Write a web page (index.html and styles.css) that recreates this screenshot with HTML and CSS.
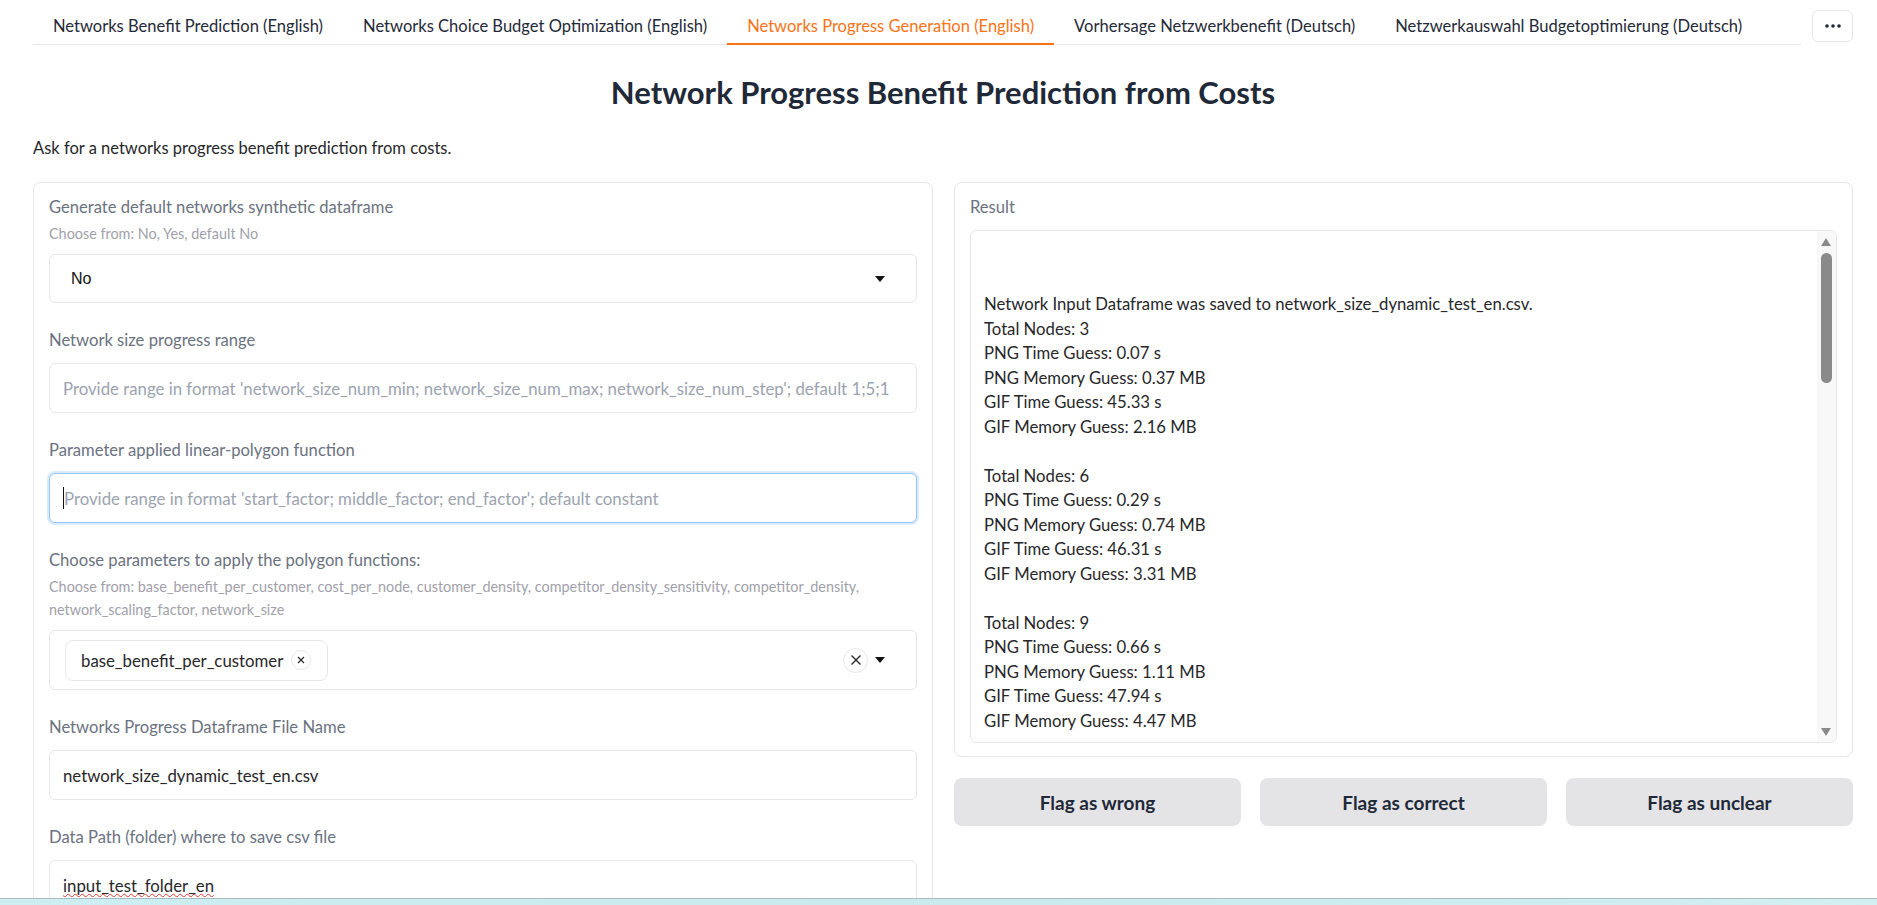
FILE: index.html
```html
<!DOCTYPE html>
<html lang="en">
<head>
<meta charset="utf-8">
<title>Network Progress Benefit Prediction from Costs</title>
<link rel="stylesheet" href="styles.css">
</head>
<body>
<div class="app">
  <div class="tabbar">
    <nav class="tabs">
      <button class="tab">Networks Benefit Prediction (English)</button>
      <button class="tab">Networks Choice Budget Optimization (English)</button>
      <button class="tab active">Networks Progress Generation (English)</button>
      <button class="tab">Vorhersage Netzwerkbenefit (Deutsch)</button>
      <button class="tab">Netzwerkauswahl Budgetoptimierung (Deutsch)</button>
    </nav>
    <button class="more" aria-label="More tabs">
      <svg width="16" height="4" viewBox="0 0 16 4"><circle cx="2" cy="2" r="1.8"/><circle cx="8" cy="2" r="1.8"/><circle cx="14" cy="2" r="1.8"/></svg>
    </button>
  </div>

  <h1 class="title">Network Progress Benefit Prediction from Costs</h1>
  <p class="desc">Ask for a networks progress benefit prediction from costs.</p>

  <div class="columns">
    <div class="panel form">
      <div class="field">
        <div class="label">Generate default networks synthetic dataframe</div>
        <div class="info">Choose from: No, Yes, default No</div>
        <div class="box select">
          <span class="select-val">No</span>
          <svg class="caret" width="10" height="6" viewBox="0 0 10 6"><path d="M0 0h10L5 6z"/></svg>
        </div>
      </div>

      <div class="field">
        <div class="label">Network size progress range</div>
        <div class="box input"><span class="placeholder">Provide range in format 'network_size_num_min; network_size_num_max; network_size_num_step'; default 1;5;1</span></div>
      </div>

      <div class="field">
        <div class="label">Parameter applied linear-polygon function</div>
        <div class="box input focused"><span class="cursor"></span><span class="placeholder">Provide range in format 'start_factor; middle_factor; end_factor'; default constant</span></div>
      </div>

      <div class="field">
        <div class="label">Choose parameters to apply the polygon functions:</div>
        <div class="info">Choose from: base_benefit_per_customer, cost_per_node, customer_density, competitor_density_sensitivity, competitor_density, network_scaling_factor, network_size</div>
        <div class="box multi">
          <span class="chip">base_benefit_per_customer<span class="chip-x">
            <svg width="8" height="8" viewBox="0 0 8 8"><path d="M1 1l6 6M7 1L1 7"/></svg></span></span>
          <span class="multi-tools">
            <span class="clear-x"><svg width="12" height="12" viewBox="0 0 12 12"><path d="M1.5 1.5l9 9M10.5 1.5l-9 9"/></svg></span>
            <svg class="caret" width="10" height="6" viewBox="0 0 10 6"><path d="M0 0h10L5 6z"/></svg>
          </span>
        </div>
      </div>

      <div class="field">
        <div class="label">Networks Progress Dataframe File Name</div>
        <div class="box input"><span class="value">network_size_dynamic_test_en.csv</span></div>
      </div>

      <div class="field">
        <div class="label">Data Path (folder) where to save csv file</div>
        <div class="box input"><span class="value spell">input_test_folder_en</span></div>
      </div>
    </div>

    <div class="right">
      <div class="panel result">
        <div class="label">Result</div>
        <div class="output">
          <div class="output-text">&nbsp;
&nbsp;
Network Input Dataframe was saved to network_size_dynamic_test_en.csv.
Total Nodes: 3
PNG Time Guess: 0.07 s
PNG Memory Guess: 0.37 MB
GIF Time Guess: 45.33 s
GIF Memory Guess: 2.16 MB
&nbsp;
Total Nodes: 6
PNG Time Guess: 0.29 s
PNG Memory Guess: 0.74 MB
GIF Time Guess: 46.31 s
GIF Memory Guess: 3.31 MB
&nbsp;
Total Nodes: 9
PNG Time Guess: 0.66 s
PNG Memory Guess: 1.11 MB
GIF Time Guess: 47.94 s
GIF Memory Guess: 4.47 MB</div>
          <div class="scrollbar">
            <svg class="sb-up" width="10" height="8" viewBox="0 0 10 8"><path d="M0 8L5 0l5 8z"/></svg>
            <div class="sb-thumb"></div>
            <svg class="sb-down" width="10" height="8" viewBox="0 0 10 8"><path d="M0 0h10L5 8z"/></svg>
          </div>
        </div>
      </div>
      <div class="flags">
        <button class="flag">Flag as wrong</button>
        <button class="flag">Flag as correct</button>
        <button class="flag">Flag as unclear</button>
      </div>
    </div>
  </div>
</div>
<div class="taskbar"></div>
</body>
</html>
```

FILE: styles.css
```css
* { box-sizing: border-box; }

html, body {
  margin: 0;
  padding: 0;
  background: #ffffff;
}

body {
  font-family: "Lato", "Noto Sans", sans-serif;
  font-size: 16.7px;
  color: #27272a;
  overflow: hidden;
  height: 905px;
}

.app {
  padding: 0 24px 0 33px;
}

/* ---------- tabs ---------- */
.tabbar {
  display: flex;
  align-items: flex-start;
}

.tabs {
  flex: 1;
  display: flex;
  height: 45px;
  padding-top: 8px;
  border-bottom: 1px solid #e5e7eb;
}

.tab {
  font: inherit;
  font-size: 16.55px;
  color: #1f2937;
  background: none;
  border: none;
  border-bottom: 2px solid transparent;
  padding: 0 20px;
  height: 37px;
  cursor: pointer;
  white-space: nowrap;
}

.tab.active {
  color: #f97316;
  border-bottom-color: #f97316;
}

.more {
  margin: 10px 0 0 11px;
  width: 41px;
  height: 32px;
  border: 1px solid #e5e7eb;
  border-radius: 6px;
  background: #fff;
  display: flex;
  align-items: center;
  justify-content: center;
  padding: 0;
}

.more svg { fill: #1f2937; }

/* ---------- header ---------- */
.title {
  margin: 27px 0 0;
  text-align: center;
  font-size: 31px;
  line-height: 40px;
  font-weight: 700;
  color: #1f2937;
}

.desc {
  margin: 24px 0 0;
  font-size: 16.5px;
  line-height: 24px;
  color: #27272a;
}

/* ---------- columns ---------- */
.columns {
  margin-top: 22px;
  display: grid;
  grid-template-columns: 900px 1fr;
  gap: 21px;
  align-items: start;
}

.panel {
  border: 1px solid #e5e7eb;
  border-radius: 8px;
  padding: 13px 15px;
  background: #fff;
}

.form {
  display: flex;
  flex-direction: column;
  gap: 26px;
}

.label {
  font-size: 16.6px;
  line-height: 22px;
  color: #6b7280;
}

.info {
  margin-top: 4px;
  font-size: 14.4px;
  line-height: 23px;
  color: #a1a1aa;
}

.box {
  margin-top: 12px;
  border: 1px solid #e5e7eb;
  border-radius: 6px;
  background: #fff;
  display: flex;
  align-items: center;
}

.info + .box { margin-top: 9px; }

.select {
  height: 49px;
  padding: 0 31px 0 21px;
  justify-content: space-between;
}

.select-val {
  font-family: "Liberation Sans", Arial, sans-serif;
  font-size: 16px;
  color: #111;
}

.caret { fill: #111; }

.input {
  height: 50px;
  padding: 0 13px;
  font-size: 16.8px;
  white-space: nowrap;
  overflow: hidden;
}

.placeholder { color: #9ca3af; }
.value { color: #27272a; }

.spell {
  text-decoration: underline wavy #e53935;
  text-decoration-skip-ink: none;
  text-underline-offset: 1px;
  text-decoration-thickness: 1px;
}

.focused {
  border-color: #93c5fd;
  box-shadow: 0 0 0 2px #dbeafe;
}

.cursor {
  display: inline-block;
  width: 1px;
  height: 22px;
  background: #111;
}

.multi {
  height: 60px;
  padding: 0 31px 0 15px;
  justify-content: space-between;
}

.chip {
  display: inline-flex;
  align-items: center;
  height: 41px;
  padding: 0 16px 0 15px;
  border: 1px solid #e5e7eb;
  border-radius: 8px;
  font-size: 16.8px;
  color: #27272a;
}

.chip-x {
  margin-left: 8px;
  width: 20px;
  height: 20px;
  border: 1px solid #e5e7eb;
  border-radius: 50%;
  display: inline-flex;
  align-items: center;
  justify-content: center;
}

.chip-x svg path { stroke: #27272a; stroke-width: 1.1; fill: none; }

.multi-tools {
  display: flex;
  align-items: center;
  gap: 7px;
}

.clear-x {
  width: 25px;
  height: 25px;
  border: 1px solid #e5e7eb;
  border-radius: 50%;
  display: inline-flex;
  align-items: center;
  justify-content: center;
}

.clear-x svg path { stroke: #27272a; stroke-width: 1.4; fill: none; }

/* ---------- result ---------- */
.right {
  display: flex;
  flex-direction: column;
  gap: 21px;
}

.result .label { margin-bottom: 12px; }

.output {
  position: relative;
  height: 513px;
  border: 1px solid #e5e7eb;
  border-radius: 6px;
  overflow: hidden;
}

.output-text {
  padding: 12px 30px 0 13px;
  white-space: pre;
  font-size: 16.7px;
  line-height: 24.5px;
  color: #27272a;
}

.scrollbar {
  position: absolute;
  top: 0;
  right: 0;
  bottom: 0;
  width: 19px;
  background: #f8f8f8;
}

.sb-up, .sb-down {
  position: absolute;
  left: 4px;
  fill: #8a8a8a;
}

.sb-up { top: 7px; }
.sb-down { bottom: 6px; }

.sb-thumb {
  position: absolute;
  top: 22px;
  left: 4px;
  width: 11px;
  height: 130px;
  border-radius: 6px;
  background: #8a8a8a;
}

.flags {
  display: grid;
  grid-template-columns: 1fr 1fr 1fr;
  gap: 19px;
}

.flag {
  height: 48px;
  border: none;
  border-radius: 8px;
  background: #e4e4e7;
  font-family: inherit;
  font-size: 19px;
  font-weight: 700;
  color: #1f2937;
}

/* ---------- bottom taskbar strip ---------- */
.taskbar {
  position: fixed;
  left: 0;
  right: 0;
  bottom: 0;
  height: 7px;
  border-top: 1px solid #a9bcbf;
  background: linear-gradient(90deg, #cdeef2, #c9ebee 50%, #d2eff2);
}
```
